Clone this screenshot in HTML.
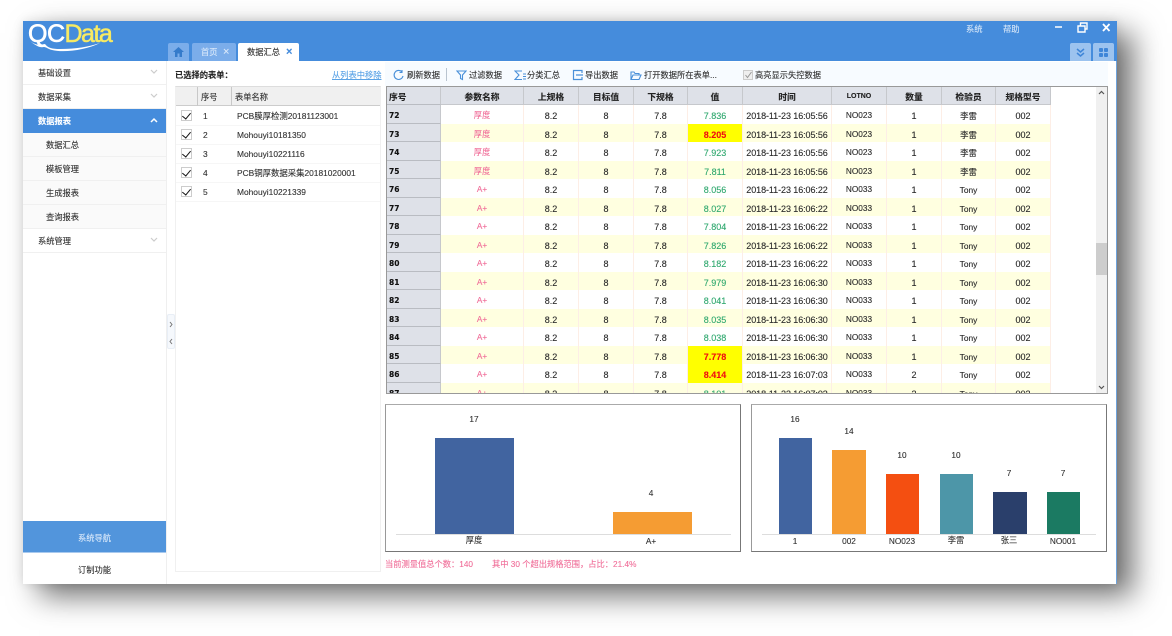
<!DOCTYPE html>
<html><head><meta charset="utf-8"><style>
*{box-sizing:border-box}
html,body{margin:0;padding:0;background:#fff;width:1172px;height:636px;overflow:hidden}
body{font-family:"Liberation Sans","Noto Sans CJK SC",sans-serif;font-size:8.25px;color:#333;position:relative;-webkit-text-stroke:.12px}
.a{position:absolute;white-space:nowrap}
#win{position:absolute;left:23px;top:21px;width:1094px;height:563px;background:#fff;box-shadow:16px 12px 28px rgba(0,0,0,.56),0 0 10px rgba(0,0,0,.1)}
#ov{position:absolute;left:0;top:0;width:1172px;height:636px;filter:blur(.3px)}
.m{position:absolute;left:23px;width:143px;height:23px;line-height:25px;padding-left:15px;background:#fff;border-bottom:1px solid #f0f0f0;color:#333}
.s{padding-left:23px;background:#fafafa}
.ch{position:absolute;left:127px;top:8px}
.lr{position:absolute;left:176px;width:204px;height:19px;line-height:18px;border-bottom:1px solid #f6f6f6;color:#333;font-size:8.4px}
.lr i{position:absolute;left:5px;top:3px;width:11px;height:11px;border:1px solid #ccc;background:#fff;font-style:normal}
.lr i:after{content:"";position:absolute;left:2px;top:0;width:4px;height:7px;border:solid #111;border-width:0 1.7px 1.7px 0;transform:rotate(40deg)}
.lr b{position:absolute;left:27px;font-weight:normal}
.lr u{position:absolute;left:61px;text-decoration:none}
#tb{position:absolute;left:386px;top:86px;width:722px;height:308px;border:1px solid #999;overflow:hidden;background:#fff}
.r{position:absolute;left:0;width:664px;height:18.5px;line-height:22px;display:flex;text-align:center;color:#2a2a2a;font-size:9px}
.r span{display:block;flex:none;height:100%;border-right:1px solid #fdeee6;white-space:nowrap;overflow:hidden}
.y{background:#ffffe0}
.r span:nth-child(1){width:54px;background:#dee1e8;border-right:1px solid #c6c8cc;border-bottom:1px solid #b9bcc2;text-align:left;padding-left:2px;font-weight:bold;color:#111;font-family:"DejaVu Sans",sans-serif;font-size:7.5px}
.r span:nth-child(2){width:83px;color:#f0709a;font-size:8.25px}
.r span:nth-child(3){width:55px}.r span:nth-child(4){width:55px}.r span:nth-child(5){width:54px}
.r span:nth-child(6){width:55px;color:#2fa86e}
.r span:nth-child(7){width:89px;letter-spacing:-.08px}.r span:nth-child(8){width:55px;font-size:8.25px}.r span:nth-child(9){width:55px}.r span:nth-child(10){width:54px;font-size:8.4px}.r span:nth-child(11){width:55px}
.r span.h{background:#ff0;color:#f01010;font-weight:bold}
.r.hd{top:0;height:18px;line-height:20px;font-weight:bold;color:#222;font-size:8.75px}
.hd span{background:#dee1e8;border-right:1px solid #c6c8cc!important;border-bottom:1px solid #c6c8cc;color:#222!important;font-size:8.75px!important}
.r.hd span:nth-child(1){font-family:inherit}
.r.hd span:nth-child(8){font-size:7px!important}
.box{position:absolute;top:404px;width:356px;height:148px;border:1px solid #777;border-top-color:#aaa;border-left-color:#999;background:#fff}
.lb{position:absolute;text-align:center;width:50px;margin-left:-25px;color:#333;white-space:nowrap;line-height:12px}
.tool{position:absolute;top:70px;height:12px;line-height:12px;color:#333;white-space:nowrap}
</style></head><body>
<div id="win"></div>
<div id="ov">
<div class="a" style="left:23px;top:21px;width:1094px;height:40px;background:#458cdc"></div>
<div class="a" style="left:1116px;top:61px;width:1px;height:523px;background:#6fa3dc"></div>

<div class="a" style="left:28px;top:22px;font-size:25px;line-height:24px;letter-spacing:-.5px;color:#fff;font-weight:normal;-webkit-text-stroke:.6px #fff">QC<span style="color:#f8ea62;letter-spacing:-1.5px;-webkit-text-stroke:.5px #f8ea62">Data</span></div>
<svg class="a" style="left:28px;top:40px" width="80" height="12" viewBox="0 0 80 12"><path d="M2 1 C8 6 14 5 17 4 C20 8 24 9 32 9 C48 9 60 7 72 3 C58 10 36 13 24 10 C20 9 18 7 16 7 C12 8 8 6 2 1Z" fill="#fff"/></svg>

<div class="a" style="left:168px;top:43px;width:21px;height:18px;background:#7badea;border-radius:2px 2px 0 0"></div>
<svg class="a" style="left:172px;top:46px" width="13" height="12" viewBox="0 0 13 12"><path d="M6.5 1 L1 6 H3 V11 H5.5 V7.5 H7.5 V11 H10 V6 H12Z" fill="#357bcb"/></svg>
<div class="a" style="left:192px;top:43px;width:44px;height:18px;background:#7badea;border-radius:2px 2px 0 0;color:#d8e8fa;line-height:20px;padding-left:9px">首页</div>
<div class="a" style="left:223px;top:43px;height:18px;line-height:19px;color:#dbe9fa;font-size:11px">×</div>
<div class="a" style="left:238px;top:43px;width:61px;height:18px;background:#fff;border-radius:2px 2px 0 0;color:#333;line-height:20px;padding-left:9px">数据汇总</div>
<div class="a" style="left:286px;top:43px;height:18px;line-height:19px;color:#458cdc;font-size:11px;font-weight:bold">×</div>

<div class="a" style="left:966px;top:24px;line-height:12px;color:#d4e5f8">系统</div>
<div class="a" style="left:1003px;top:24px;line-height:12px;color:#d4e5f8">帮助</div>
<svg class="a" style="left:1052px;top:20px" width="60" height="14" viewBox="0 0 60 14" fill="none" stroke="#fff"><path d="M3 7H10" stroke-width="1.5"/><path d="M26 6H33V12H26Z M28.500 5.500V3H35V9H33.500" stroke-width="1.4"/><path d="M51 4L57.500 11M57.500 4L51 11" stroke-width="1.8"/></svg>
<div class="a" style="left:1070px;top:43px;width:21px;height:18px;background:#9cc3ef;border-radius:2px 2px 0 0"></div>
<svg class="a" style="left:1075px;top:48px" width="11" height="10" viewBox="0 0 11 10" fill="none" stroke="#3f86d8" stroke-width="1.5"><path d="M2 1L5.500 4L9 1M2 5L5.500 8L9 5"/></svg>
<div class="a" style="left:1093px;top:43px;width:21px;height:18px;background:#9cc3ef;border-radius:2px 2px 0 0"></div>
<svg class="a" style="left:1098px;top:47px" width="11" height="11" viewBox="0 0 11 11" fill="#3f86d8"><rect x="1" y="1" width="4" height="4" rx="1"/><rect x="6" y="1" width="4" height="4" rx="1"/><rect x="1" y="6" width="4" height="4" rx="1"/><rect x="6" y="6" width="4" height="4" rx="1"/></svg>

<div class="a" style="left:166px;top:61px;width:1px;height:523px;background:#efefef"></div>
<div class="m" style="top:61px;height:24px">基础设置<svg class="ch" width="8" height="6" fill="none" stroke="#ccc" stroke-width="1.2"><path d="M1 1L4 4L7 1"/></svg></div>
<div class="m" style="top:85px;height:24px">数据采集<svg class="ch" width="8" height="6" fill="none" stroke="#ccc" stroke-width="1.2"><path d="M1 1L4 4L7 1"/></svg></div>
<div class="m" style="top:109px;height:24px;background:#458cdc;color:#fff;font-weight:bold;border:0">数据报表<svg class="ch" width="8" height="6" fill="none" stroke="#fff" stroke-width="1.5"><path d="M1 5L4 2L7 5"/></svg></div>
<div class="m s" style="top:133px;height:24px">数据汇总</div>
<div class="m s" style="top:157px;height:24px">模板管理</div>
<div class="m s" style="top:181px;height:24px">生成报表</div>
<div class="m s" style="top:205px;height:24px">查询报表</div>
<div class="m" style="top:229px;height:24px">系统管理<svg class="ch" width="8" height="6" fill="none" stroke="#ccc" stroke-width="1.2"><path d="M1 1L4 4L7 1"/></svg></div>
<div class="a" style="left:23px;top:521px;width:143px;height:32px;background:#5295dc;border-bottom:1px solid #a8c9ee;color:#d8e8fa;text-align:center;line-height:35px">系统导航</div>
<div class="a" style="left:23px;top:553px;width:143px;height:31px;background:#fff;color:#333;text-align:center;line-height:35px">订制功能</div>

<div class="a" style="left:167px;top:314px;width:8px;height:35px;background:#f5f8fc;border:1px solid #e8eef6;border-radius:2px"></div>
<svg class="a" style="left:168px;top:321px" width="6" height="24" fill="none" stroke="#777"><path d="M2 1L4 3.500L2 6M4 18L2 20.500L4 23"/></svg>

<div class="a" style="left:175px;top:70px;line-height:12px;font-weight:bold;color:#222">已选择的表单：</div>
<div class="a" style="left:332px;top:70px;line-height:12px;color:#5ba3e6;text-decoration:underline">从列表中移除</div>
<div class="a" style="left:175px;top:86px;width:206px;height:486px;border:1px solid #f0f0f0;border-top-color:#ddd;background:#fff"></div>
<div class="a" style="left:176px;top:87px;width:204px;height:19px;background:#f0f0f0;border-bottom:1px solid #ccc;line-height:22px;color:#333"><span class="a" style="left:25px;top:0">序号</span><span class="a" style="left:59px;top:0">表单名称</span><span class="a" style="left:21px;top:0;width:1px;height:19px;background:#c8c8c8"></span><span class="a" style="left:55px;top:0;width:1px;height:19px;background:#c8c8c8"></span></div>
<div class="lr" style="top:107px"><i></i><b>1</b><u>PCB膜厚检测20181123001</u></div>
<div class="lr" style="top:126px"><i></i><b>2</b><u>Mohouyi10181350</u></div>
<div class="lr" style="top:145px"><i></i><b>3</b><u>Mohouyi10221116</u></div>
<div class="lr" style="top:164px"><i></i><b>4</b><u>PCB铜厚数据采集20181020001</u></div>
<div class="lr" style="top:183px"><i></i><b>5</b><u>Mohouyi10221339</u></div>

<div class="a" style="left:385px;top:62px;width:723px;height:24px;background:#f7fbff"></div>
<svg class="a" style="left:393px;top:69px" width="11" height="12" fill="none" stroke="#4a90d9" stroke-width="1.1"><path d="M9 3A4.500 4.500 0 1 0 10 7M9 1V3.500H6.500"/></svg><div class="tool" style="left:407px">刷新数据</div>
<div class="a" style="left:446px;top:68px;width:1px;height:13px;background:#b9c4d0"></div>
<svg class="a" style="left:456px;top:69px" width="11" height="12" fill="none" stroke="#4a90d9" stroke-width="1.1"><path d="M1 2H10L6.500 6V10.500L4.500 9.500V6Z"/></svg><div class="tool" style="left:469px">过滤数据</div>
<svg class="a" style="left:514px;top:69px" width="12" height="12" fill="none" stroke="#4a90d9" stroke-width="1.1"><path d="M8 2H1L5 6L1 10.500H8M9 5H12M9 7.500H12M9 10H12"/></svg><div class="tool" style="left:527px">分类汇总</div>
<svg class="a" style="left:572px;top:69px" width="12" height="12" fill="none" stroke="#4a90d9" stroke-width="1.2"><path d="M10 4V1.500H1.500V10.500H10V8M4 6H11"/></svg><div class="tool" style="left:585px">导出数据</div>
<svg class="a" style="left:630px;top:69px" width="12" height="12" fill="none" stroke="#4a90d9" stroke-width="1.1"><path d="M1 10.500V3H4L5 4.500H9V6M1 10.500H9L11 6H3Z"/></svg><div class="tool" style="left:644px">打开数据所在表单...</div>
<div class="a" style="left:743px;top:70px;width:10px;height:10px;background:#efefef;border:1px solid #ccc"></div>
<svg class="a" style="left:744px;top:71px" width="9" height="8" fill="none" stroke="#999"><path d="M1.500 4L3.500 6.500L7.500 1"/></svg><div class="tool" style="left:755px">高亮显示失控数据</div>

<div id="tb">
<div class="r hd"><span>序号</span><span>参数名称</span><span>上规格</span><span>目标值</span><span>下规格</span><span>值</span><span>时间</span><span>LOTNO</span><span>数量</span><span>检验员</span><span>规格型号</span></div>
<div class="r" style="top:18px"><span>72</span><span>厚度</span><span>8.2</span><span>8</span><span>7.8</span><span>7.836</span><span>2018-11-23 16:05:56</span><span>NO023</span><span>1</span><span>李雷</span><span>002</span></div>
<div class="r y" style="top:36.500px"><span>73</span><span>厚度</span><span>8.2</span><span>8</span><span>7.8</span><span class="h">8.205</span><span>2018-11-23 16:05:56</span><span>NO023</span><span>1</span><span>李雷</span><span>002</span></div>
<div class="r" style="top:55px"><span>74</span><span>厚度</span><span>8.2</span><span>8</span><span>7.8</span><span>7.923</span><span>2018-11-23 16:05:56</span><span>NO023</span><span>1</span><span>李雷</span><span>002</span></div>
<div class="r y" style="top:73.500px"><span>75</span><span>厚度</span><span>8.2</span><span>8</span><span>7.8</span><span>7.811</span><span>2018-11-23 16:05:56</span><span>NO023</span><span>1</span><span>李雷</span><span>002</span></div>
<div class="r" style="top:92px"><span>76</span><span>A+</span><span>8.2</span><span>8</span><span>7.8</span><span>8.056</span><span>2018-11-23 16:06:22</span><span>NO033</span><span>1</span><span>Tony</span><span>002</span></div>
<div class="r y" style="top:110.500px"><span>77</span><span>A+</span><span>8.2</span><span>8</span><span>7.8</span><span>8.027</span><span>2018-11-23 16:06:22</span><span>NO033</span><span>1</span><span>Tony</span><span>002</span></div>
<div class="r" style="top:129px"><span>78</span><span>A+</span><span>8.2</span><span>8</span><span>7.8</span><span>7.804</span><span>2018-11-23 16:06:22</span><span>NO033</span><span>1</span><span>Tony</span><span>002</span></div>
<div class="r y" style="top:147.500px"><span>79</span><span>A+</span><span>8.2</span><span>8</span><span>7.8</span><span>7.826</span><span>2018-11-23 16:06:22</span><span>NO033</span><span>1</span><span>Tony</span><span>002</span></div>
<div class="r" style="top:166px"><span>80</span><span>A+</span><span>8.2</span><span>8</span><span>7.8</span><span>8.182</span><span>2018-11-23 16:06:22</span><span>NO033</span><span>1</span><span>Tony</span><span>002</span></div>
<div class="r y" style="top:184.500px"><span>81</span><span>A+</span><span>8.2</span><span>8</span><span>7.8</span><span>7.979</span><span>2018-11-23 16:06:30</span><span>NO033</span><span>1</span><span>Tony</span><span>002</span></div>
<div class="r" style="top:203px"><span>82</span><span>A+</span><span>8.2</span><span>8</span><span>7.8</span><span>8.041</span><span>2018-11-23 16:06:30</span><span>NO033</span><span>1</span><span>Tony</span><span>002</span></div>
<div class="r y" style="top:221.500px"><span>83</span><span>A+</span><span>8.2</span><span>8</span><span>7.8</span><span>8.035</span><span>2018-11-23 16:06:30</span><span>NO033</span><span>1</span><span>Tony</span><span>002</span></div>
<div class="r" style="top:240px"><span>84</span><span>A+</span><span>8.2</span><span>8</span><span>7.8</span><span>8.038</span><span>2018-11-23 16:06:30</span><span>NO033</span><span>1</span><span>Tony</span><span>002</span></div>
<div class="r y" style="top:258.500px"><span>85</span><span>A+</span><span>8.2</span><span>8</span><span>7.8</span><span class="h">7.778</span><span>2018-11-23 16:06:30</span><span>NO033</span><span>1</span><span>Tony</span><span>002</span></div>
<div class="r" style="top:277px"><span>86</span><span>A+</span><span>8.2</span><span>8</span><span>7.8</span><span class="h">8.414</span><span>2018-11-23 16:07:03</span><span>NO033</span><span>2</span><span>Tony</span><span>002</span></div>
<div class="r y" style="top:295.500px"><span>87</span><span>A+</span><span>8.2</span><span>8</span><span>7.8</span><span>8.101</span><span>2018-11-23 16:07:03</span><span>NO033</span><span>2</span><span>Tony</span><span>002</span></div>
<div class="a" style="left:709px;top:0;width:11px;height:306px;background:#f0f0f0"></div>
<div class="a" style="left:709px;top:156px;width:11px;height:32px;background:#cdcdcd"></div>
<svg class="a" style="left:711px;top:3px" width="7" height="6" fill="none" stroke="#555" stroke-width="1.2"><path d="M1 4L3.500 1.500L6 4"/></svg>
<svg class="a" style="left:711px;top:297px" width="7" height="6" fill="none" stroke="#555" stroke-width="1.2"><path d="M1 2L3.500 4.500L6 2"/></svg>
</div>

<div class="box" style="left:385px"></div>
<div class="box" style="left:751px"></div>
<div class="a" style="left:396px;top:534px;width:335px;height:1px;background:#ddd"></div>
<div class="a" style="left:762px;top:534px;width:334px;height:1px;background:#ddd"></div>
<div class="a" style="left:435px;top:438px;width:79px;height:96px;background:#4164a0"></div>
<div class="a" style="left:613px;top:512px;width:79px;height:22px;background:#f59c33"></div>
<div class="a" style="left:779px;top:438px;width:33px;height:96px;background:#4164a0"></div>
<div class="a" style="left:832px;top:450px;width:34px;height:84px;background:#f59c33"></div>
<div class="a" style="left:886px;top:474px;width:33px;height:60px;background:#f44f11"></div>
<div class="a" style="left:940px;top:474px;width:33px;height:60px;background:#4d96a8"></div>
<div class="a" style="left:993px;top:492px;width:34px;height:42px;background:#2a3f6b"></div>
<div class="a" style="left:1047px;top:492px;width:33px;height:42px;background:#1b7a62"></div>
<div class="lb" style="left:474px;top:414px">17</div><div class="lb" style="left:651px;top:488px">4</div>
<div class="lb" style="left:474px;top:535px">厚度</div><div class="lb" style="left:651px;top:536px">A+</div>
<div class="lb" style="left:795px;top:414px">16</div><div class="lb" style="left:849px;top:426px">14</div><div class="lb" style="left:902px;top:450px">10</div><div class="lb" style="left:956px;top:450px">10</div><div class="lb" style="left:1009px;top:468px">7</div><div class="lb" style="left:1063px;top:468px">7</div>
<div class="lb" style="left:795px;top:536px">1</div><div class="lb" style="left:849px;top:536px">002</div><div class="lb" style="left:902px;top:536px">NO023</div><div class="lb" style="left:956px;top:535px">李雷</div><div class="lb" style="left:1009px;top:535px">张三</div><div class="lb" style="left:1063px;top:536px">NO001</div>

<div class="a" style="left:385px;top:559px;line-height:12px;color:#f0709a">当前测量值总个数：140</div>
<div class="a" style="left:492px;top:559px;line-height:12px;color:#f0709a">其中 30 个超出规格范围，占比：21.4%</div>
</div>
</body></html>
